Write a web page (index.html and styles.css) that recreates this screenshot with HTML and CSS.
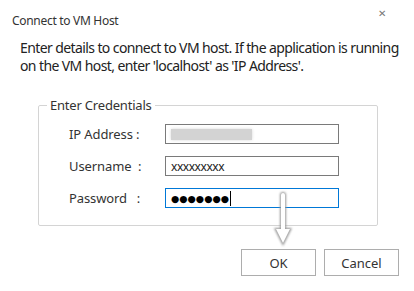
FILE: index.html
```html
<!DOCTYPE html>
<html>
<head>
<meta charset="utf-8">
<link rel="stylesheet" href="styles.css">
</head>
<body>
<div class="dialog">
  <div class="titlebar">
    <span class="title">Connect to VM Host</span>
    <span class="close">✕</span>
  </div>
  <p class="desc">Enter details to connect to VM host. If the application is running<br>on the VM host, enter 'localhost' as 'IP Address'.</p>
  <fieldset class="creds">
    <legend>Enter Credentials</legend>
    <div class="row">
      <label class="lbl">IP Address :</label>
      <div class="field"><span class="blur"></span></div>
    </div>
    <div class="row">
      <label class="lbl">Username&nbsp;&nbsp;:</label>
      <div class="field"><span class="user">xxxxxxxxx</span></div>
    </div>
    <div class="row">
      <label class="lbl">Password&nbsp;&nbsp;&nbsp;:</label>
      <div class="field focus"><span class="dots">●●●●●●●</span><span class="caret"></span></div>
    </div>
  </fieldset>
  <div class="buttons">
    <button class="btn">OK</button>
    <button class="btn">Cancel</button>
  </div>
  <svg class="arrow" width="24" height="60" viewBox="0 0 24 60">
    <defs>
      <filter id="sh" x="-50%" y="-20%" width="200%" height="140%">
        <feGaussianBlur stdDeviation="1.2"/>
      </filter>
    </defs>
    <g filter="url(#sh)" fill="#9a9a9a">
      <rect x="9" y="2" width="6" height="40" rx="3"/>
      <polygon points="3,38 21,38 12,56"/>
    </g>
    <g fill="#ffffff">
      <rect x="10" y="3" width="4" height="38" rx="2"/>
      <polygon points="5,39 19,39 12,53"/>
    </g>
  </svg>
</div>
</body>
</html>
```
FILE: styles.css
```css
html, body {
  margin: 0;
  padding: 0;
  background: #ffffff;
}
.dialog {
  position: relative;
  width: 414px;
  height: 291px;
  background: #ffffff;
  font-family: "Noto Sans", "Open Sans", sans-serif;
  color: #1e1e1e;
  box-sizing: border-box;
}
.titlebar {
  display: flex;
  justify-content: space-between;
  align-items: flex-start;
  padding: 12px 28px 0 12px;
  height: 20px;
}
.title {
  font-size: 12px;
  color: #333333;
  letter-spacing: -0.3px;
}
.close {
  font-size: 10px;
  color: #777777;
  margin-top: -6px;
}
.desc {
  margin: 7px 0 0 20px;
  white-space: nowrap;
  font-size: 14px;
  line-height: 18px;
  color: #222222;
  letter-spacing: -0.6px;
}
.creds {
  margin: 21px 0 0 38px;
  width: 340px;
  height: 130px;
  box-sizing: border-box;
  border: 1px solid #d4d4d4;
  border-radius: 2px;
  padding: 10px 0 0 8px;
  display: flex;
  flex-direction: column;
  gap: 12px;
}
.creds legend {
  font-size: 13px;
  color: #333333;
  padding: 0 3px;
  margin-left: 0;
  letter-spacing: -0.2px;
}
.row {
  display: flex;
  align-items: center;
  margin-left: 22px;
}
.lbl {
  width: 96px;
  font-size: 13px;
  color: #333333;
  letter-spacing: -0.1px;
  white-space: pre;
}
.field {
  width: 174px;
  height: 20px;
  box-sizing: border-box;
  border: 1px solid #7a7a7a;
  display: flex;
  align-items: center;
  padding-left: 5px;
}
.field.focus {
  border-color: #0078d7;
}
.blur {
  display: block;
  width: 81px;
  height: 11px;
  background: #d3d3d3;
  box-shadow: 0 0 3px #d8d8d8;
}
.user {
  font-size: 12px;
  color: #222222;
  letter-spacing: -0.45px;
  margin-top: 1px;
}
.dots {
  font-family: "DejaVu Sans", sans-serif;
  font-size: 9.5px;
  letter-spacing: 0;
  color: #000000;
}
.caret {
  display: block;
  width: 1px;
  height: 15px;
  margin-left: 1px;
  background: #000000;
}
.buttons {
  display: flex;
  gap: 8px;
  justify-content: flex-end;
  padding-right: 15px;
  margin-top: 23px;
}
.btn {
  width: 75px;
  height: 27px;
  background: #ffffff;
  border: 1px solid #adadad;
  font-family: "Noto Sans", "Open Sans", sans-serif;
  font-size: 13px;
  color: #333333;
  padding: 0;
}
.arrow {
  position: absolute;
  left: 271px;
  top: 190px;
}
```
